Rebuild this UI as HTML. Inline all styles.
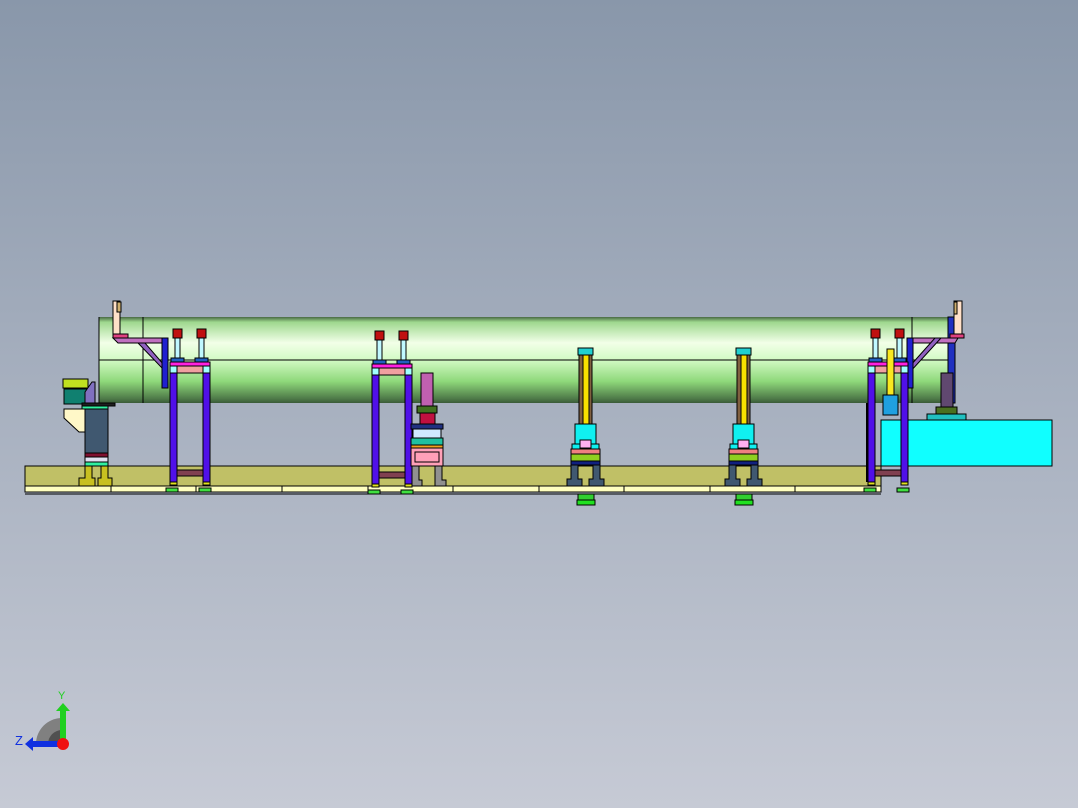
<!DOCTYPE html>
<html><head><style>
html,body{margin:0;padding:0;width:1078px;height:808px;overflow:hidden;background:linear-gradient(#8997aa,#c6cad5);}
svg{position:absolute;left:0;top:0;}
</style></head><body>
<svg width="1078" height="808" viewBox="0 0 1078 808" xmlns="http://www.w3.org/2000/svg" stroke="#000" stroke-width="1">
<defs>
<linearGradient id="tube" x1="0" y1="0" x2="0" y2="1">
<stop offset="0" stop-color="#4a6a44"/><stop offset="0.06" stop-color="#9ed88e"/><stop offset="0.3" stop-color="#f2ffe8"/><stop offset="0.5" stop-color="#d2fac4"/><stop offset="0.75" stop-color="#8ed87a"/><stop offset="0.95" stop-color="#4e7a48"/><stop offset="1" stop-color="#3a5a38"/>
</linearGradient>
</defs>
<!-- tube -->
<rect x="99" y="317" width="851" height="86" fill="url(#tube)" stroke="none"/>
<line x1="99" y1="317" x2="99" y2="403"/>
<line x1="143" y1="317" x2="143" y2="403"/>
<line x1="912" y1="317" x2="912" y2="403"/>
<line x1="99" y1="360" x2="950" y2="360"/>
<!-- base -->
<rect x="25" y="466" width="856" height="20" fill="#c0c066"/>
<rect x="25" y="486" width="856" height="6" fill="#ffffc0"/>
<line x1="25" y1="494" x2="881" y2="494"/>
<g stroke-width="1"><line x1="111" y1="486" x2="111" y2="492"/><line x1="196" y1="486" x2="196" y2="492"/><line x1="282" y1="486" x2="282" y2="492"/><line x1="368" y1="486" x2="368" y2="492"/><line x1="453" y1="486" x2="453" y2="492"/><line x1="539" y1="486" x2="539" y2="492"/><line x1="624" y1="486" x2="624" y2="492"/><line x1="710" y1="486" x2="710" y2="492"/><line x1="795" y1="486" x2="795" y2="492"/></g>
<!-- cyan box -->
<rect x="881" y="420" width="171" height="46" fill="#10ffff"/>
<line x1="867" y1="403" x2="867" y2="482" stroke-width="2"/>

<!-- left bracket -->
<rect x="113" y="301" width="7" height="34" fill="#ffe0c8"/>
<rect x="117" y="302" width="4" height="10" fill="#d0b070"/>
<rect x="113" y="334" width="15" height="4" fill="#e04080"/>
<polygon points="113,338 167,338 166,343 118,343" fill="#c070c0"/>
<polygon points="138,343 145,343 164,365 162,368" fill="#9060c0"/>
<rect x="162" y="338" width="6" height="50" fill="#2020d0"/>
<!-- right bracket -->
<rect x="948" y="317" width="7" height="86" fill="#2030c0"/>
<rect x="954" y="301" width="8" height="34" fill="#ffe0c8"/>
<rect x="954" y="302" width="3" height="12" fill="#d0b070"/>
<rect x="950" y="334" width="14" height="4" fill="#e04080"/>
<polygon points="910,338 958,338 955,343 913,343" fill="#c070c0"/>
<polygon points="910,366 935,338 941,338 910,372" fill="#9060c0"/>
<rect x="907" y="338" width="6" height="50" fill="#2020d0"/>
<rect x="941" y="373" width="12" height="34" fill="#604870"/>
<rect x="936" y="407" width="21" height="7" fill="#4a7020"/>
<rect x="927" y="414" width="39" height="6" fill="#20c0c0"/>

<!-- frames -->
<g id="f1">
<rect x="171" y="358" width="13" height="4" fill="#2060c0"/>
<rect x="195" y="358" width="13" height="4" fill="#2060c0"/>
<rect x="175" y="338" width="5" height="20" fill="#c0f8ff"/>
<rect x="199" y="338" width="5" height="20" fill="#c0f8ff"/>
<rect x="173" y="329" width="9" height="9" fill="#c01010"/>
<rect x="197" y="329" width="9" height="9" fill="#c01010"/>
<rect x="170" y="362" width="40" height="4" fill="#ff20e0"/>
<rect x="170" y="366" width="40" height="7" fill="#f0a0a0"/>
<rect x="170" y="366" width="7" height="7" fill="#a0ffff"/>
<rect x="203" y="366" width="7" height="7" fill="#a0ffff"/>
<rect x="170" y="373" width="7" height="109" fill="#5010e8"/>
<rect x="203" y="373" width="7" height="109" fill="#5010e8"/>
<rect x="177" y="470" width="26" height="6" fill="#804050"/>
<rect x="170" y="482" width="7" height="3" fill="#e0e020"/>
<rect x="203" y="482" width="7" height="3" fill="#e0e020"/>
<rect x="166" y="488" width="12" height="4" fill="#40e040"/>
<rect x="199" y="488" width="12" height="4" fill="#40e040"/>
</g>
<use href="#f1" x="202" y="2"/>
<use href="#f1" x="698" y="0"/>
<rect x="887" y="349" width="7" height="66" fill="#f8e820"/>
<rect x="883" y="395" width="15" height="20" fill="#20a0e0"/>

<!-- pillars -->
<g id="p1">
<rect x="578" y="348" width="15" height="7" fill="#20d0d0"/>
<rect x="579" y="355" width="13" height="85" fill="#806040"/>
<rect x="583" y="355" width="6" height="85" fill="#f8e000"/>
<rect x="575" y="424" width="21" height="20" fill="#10f0f0"/>
<rect x="572" y="444" width="27" height="6" fill="#10f0f0"/>
<rect x="580" y="440" width="11" height="8" fill="#ffb0f0"/>
<rect x="571" y="449" width="29" height="5" fill="#f08080"/>
<rect x="571" y="454" width="29" height="7" fill="#90d020"/>
<rect x="571" y="461" width="29" height="4" fill="#102080"/>
<polygon points="571,465 578,465 578,479 582,479 582,486 567,486 567,479 571,479" fill="#405870"/>
<polygon points="593,465 600,465 600,479 604,479 604,486 589,486 589,479 593,479" fill="#405870"/>
<rect x="578" y="494" width="16" height="6" fill="#30d030"/>
<rect x="577" y="500" width="18" height="5" fill="#20e020"/>
</g>
<use href="#p1" x="158" y="0"/>

<!-- left unit -->
<rect x="63" y="379" width="25" height="9" fill="#c0e020"/>
<rect x="64" y="389" width="23" height="15" fill="#108070"/>
<polygon points="85,404 85,392 92,382 95,382 95,404" fill="#8070c0"/>
<rect x="82" y="403" width="33" height="3" fill="#202020"/>
<rect x="82" y="406" width="26" height="3" fill="#30f0a0"/>
<polygon points="64,409 86,409 86,432 79,432 64,418" fill="#fff8c8"/>
<rect x="85" y="409" width="23" height="46" fill="#405870"/>
<rect x="85" y="453" width="23" height="4" fill="#801030"/>
<rect x="85" y="457" width="23" height="5" fill="#e0e0f0"/>
<rect x="85" y="462" width="23" height="4" fill="#30f0a0"/>
<polygon points="85,466 92,466 92,478 95,478 95,486 79,486 79,478 85,478" fill="#c8c020"/>
<polygon points="101,466 108,466 108,478 112,478 112,486 98,486 98,478 101,478" fill="#c8c020"/>

<!-- center unit -->
<rect x="421" y="373" width="12" height="33" fill="#c060b0"/>
<rect x="417" y="406" width="20" height="7" fill="#407020"/>
<rect x="420" y="413" width="15" height="11" fill="#c01040"/>
<rect x="411" y="424" width="32" height="5" fill="#203080"/>
<rect x="413" y="429" width="28" height="9" fill="#d0e8ff"/>
<rect x="411" y="438" width="32" height="7" fill="#20c0a0"/>
<rect x="411" y="445" width="32" height="3" fill="#f0a020"/>
<rect x="411" y="448" width="32" height="18" fill="#ffa0b8"/>
<rect x="415" y="452" width="24" height="10" fill="#ffa0b8"/>
<polygon points="412,466 419,466 419,480 422,480 422,486 412,486" fill="#909090"/>
<polygon points="435,466 442,466 442,480 446,480 446,486 435,486" fill="#909090"/>

<!-- triad -->
<g stroke="none">
<path d="M36,744 A26,26 0 0 1 62,718 L62,744 Z" fill="#808080"/>
<path d="M48,744 A14,14 0 0 1 62,730 L62,744 Z" fill="#505050"/>
<rect x="60" y="710" width="6" height="34" fill="#20d020"/>
<polygon points="56,711 63,703 70,711" fill="#20d020"/>
<rect x="32" y="741" width="30" height="6" fill="#1030e0"/>
<polygon points="33,737 25,744 33,751" fill="#1030e0"/>
<circle cx="63" cy="744" r="6" fill="#f01010"/>
</g>
<text x="58" y="699" font-family="Liberation Sans, sans-serif" font-size="11" fill="#20d020" stroke="none">Y</text>
<text x="15" y="745" font-family="Liberation Sans, sans-serif" font-size="13" fill="#1030e0" stroke="none">Z</text>
</svg>
</body></html>
